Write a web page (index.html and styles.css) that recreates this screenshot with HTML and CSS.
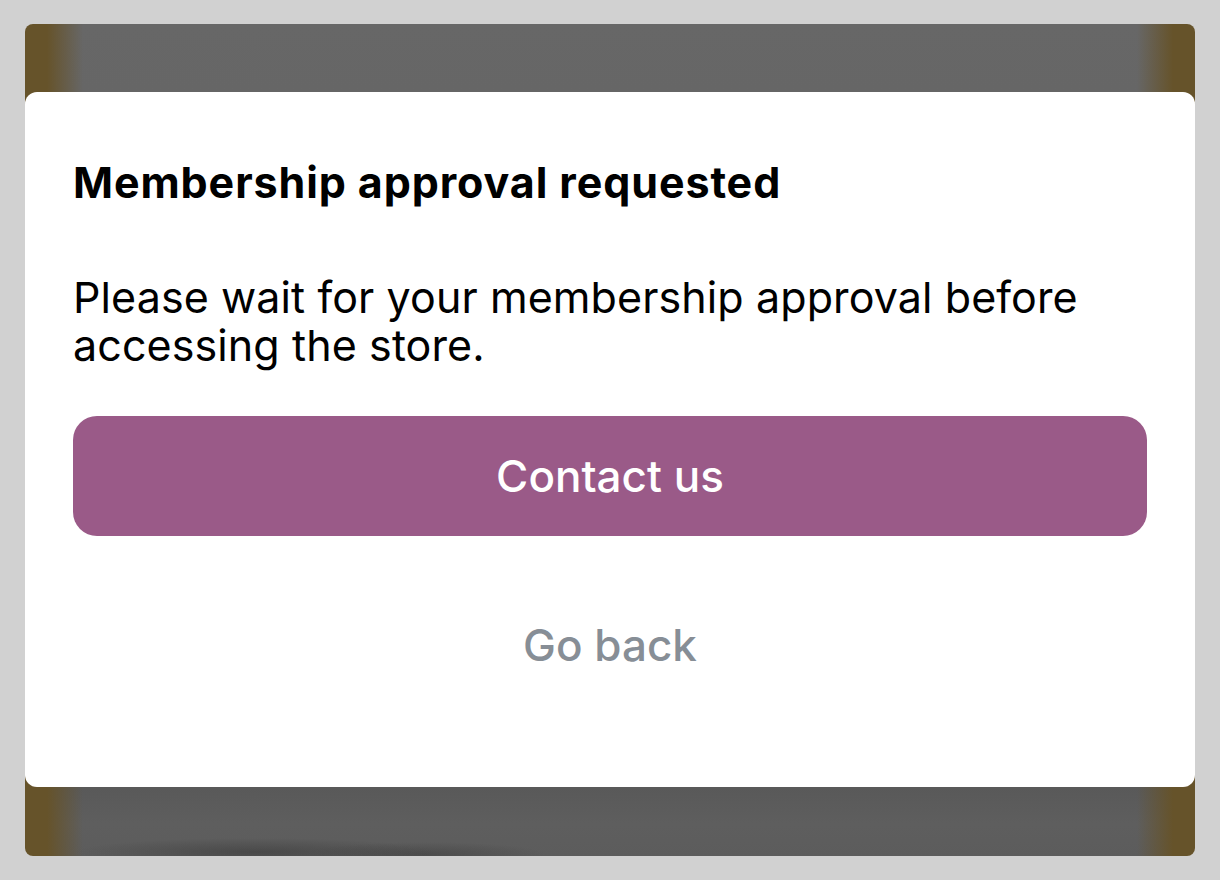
FILE: index.html
```html
<!DOCTYPE html>
<html lang="en">
<head>
<meta charset="utf-8">
<title>Membership approval requested</title>
<link rel="stylesheet" href="styles.css">
</head>
<body>
<div class="screen">
  <div class="modal">
    <h1 class="title">Membership approval requested</h1>
    <p class="message">Please wait for your membership approval before accessing the store.</p>
    <button class="primary">Contact us</button>
    <button class="secondary">Go back</button>
  </div>
</div>
</body>
</html>
```
FILE: styles.css
```css
html, body {
  margin: 0;
  padding: 0;
}
body {
  background: #d1d1d1;
  width: 1220px;
  height: 880px;
  padding: 24px 25px;
  box-sizing: border-box;
  font-family: Inter, "Noto Sans", sans-serif;
}
.screen {
  width: 1170px;
  height: 832px;
  border-radius: 8px;
  overflow: hidden;
  padding-top: 68px;
  box-sizing: border-box;
  background:
    linear-gradient(to right, #66532a 0, #66532a 22px, rgba(102,102,102,0) 58px, rgba(102,102,102,0) 1112px, #66532a 1148px, #66532a 100%),
    radial-gradient(ellipse 180px 14px at 230px 828px, rgba(60,60,60,0.6), rgba(60,60,60,0)),
    radial-gradient(ellipse 120px 12px at 400px 830px, rgba(60,60,60,0.5), rgba(60,60,60,0)),
    linear-gradient(to bottom, #676767 0, #666666 68px, #595959 764px, #5e5e5e 800px, #5c5c5c 832px);
}
.modal {
  background: #ffffff;
  height: 695px;
  border-radius: 12px;
  padding: 64px 48px 0;
  box-sizing: border-box;
  display: flex;
  flex-direction: column;
}
.title {
  margin: 0;
  font-size: 43px;
  font-weight: 700;
  line-height: 52px;
  letter-spacing: 0.9px;
  color: #000;
}
.message {
  margin: 65px 0 0;
  font-size: 43px;
  font-weight: 400;
  line-height: 48px;
  letter-spacing: 0.1px;
  color: #000;
}
.primary {
  margin-top: 47px;
  height: 120px;
  flex: none;
  border: none;
  border-radius: 24px;
  background: #9a5a88;
  color: #fff;
  font-family: inherit;
  font-size: 44px;
  font-weight: 500;
}
.secondary {
  margin-top: 49px;
  height: 120px;
  flex: none;
  border: none;
  background: transparent;
  color: #878e96;
  font-family: inherit;
  font-size: 44px;
  font-weight: 500;
}
```
